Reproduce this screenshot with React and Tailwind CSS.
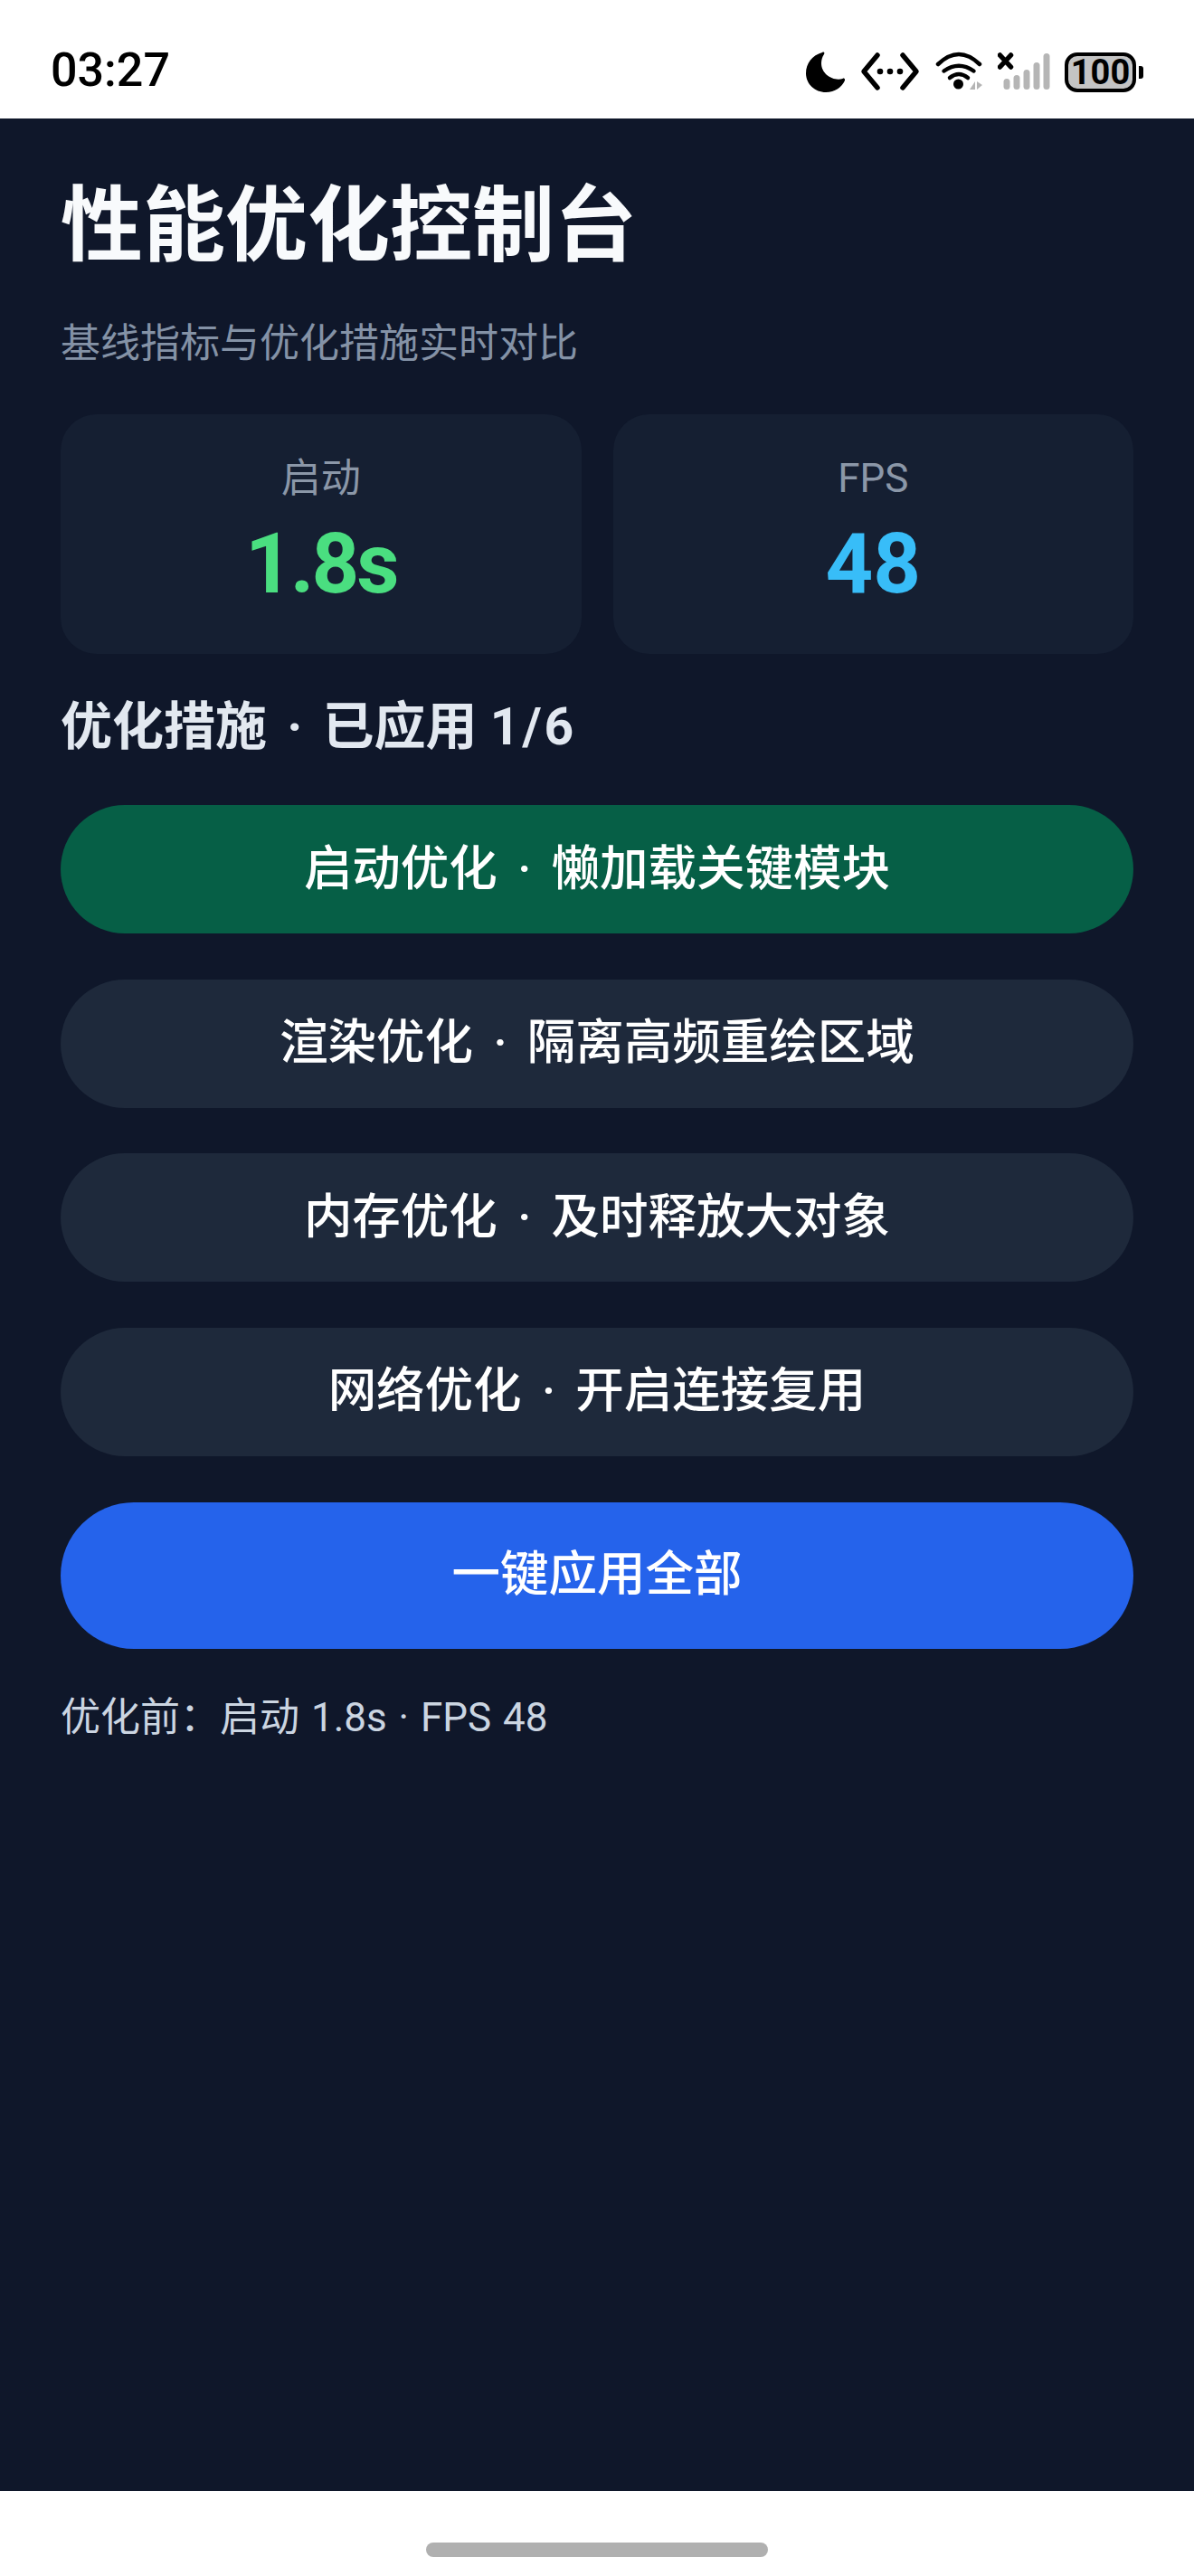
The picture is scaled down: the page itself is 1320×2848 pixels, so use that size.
const cjk = 'font-["Roboto","Noto_Sans_CJK_SC",sans-serif]';

const fixes = [
  { label: '启动优化 · 懒加载关键模块', on: true },
  { label: '渲染优化 · 隔离高频重绘区域' },
  { label: '内存优化 · 及时释放大对象' },
  { label: '网络优化 · 开启连接复用' },
];

const StatusIcons = () => (
  <div className="flex items-center h-[46px]">
    <svg width="44" height="46" viewBox="0 0 44 46" className="mr-[16px]">
      <path d="M18 1C7 4 0 13 0 24c0 12 10 21 22 21 10 0 18-6 21-13 .500-2-1-3-2.500-2C30 33 17 25 17 13c0-4 1-7 3-10 1-2 0-3-2-2z" fill="#000" />
    </svg>
    <svg width="66" height="46" viewBox="0 0 66 46" className="mr-[17px]" fill="none" stroke="#000" strokeWidth="5.500" strokeLinecap="round" strokeLinejoin="round">
      <path d="M19 4 4 22l15 18M47 4l15 18-15 18" />
      <circle cx="22" cy="22" r="3.300" fill="#000" stroke="none" />
      <circle cx="33" cy="22" r="3.300" fill="#000" stroke="none" />
      <circle cx="44" cy="22" r="3.300" fill="#000" stroke="none" />
    </svg>
    <svg width="54" height="46" viewBox="0 0 54 46" className="mr-[15px]" fill="none">
      <path d="M3 14Q26-8 49 14" stroke="#000" strokeWidth="4.500" strokeLinecap="round" />
      <path d="M9.500 21.500Q26 10 42.500 21.500" stroke="#000" strokeWidth="4.500" strokeLinecap="round" />
      <path d="M16 29Q26 21 36 29" stroke="#000" strokeWidth="4.500" strokeLinecap="round" />
      <circle cx="25.500" cy="36" r="5.500" fill="#000" />
      <path d="M44 33v9h-6zM46 33v9l6-5z" fill="#b5b5b5" />
    </svg>
    <svg width="58" height="46" viewBox="0 0 58 46" className="mr-[16px]">
      <path d="M2.500 4l12 13M14.500 4l-12 13" stroke="#000" strokeWidth="5.500" strokeLinecap="round" />
      <rect x="6.500" y="30" width="7" height="12" rx="3.500" fill="#b5b5b5" />
      <rect x="17.500" y="26" width="7" height="16" rx="3.500" fill="#b5b5b5" />
      <rect x="28.500" y="20" width="7" height="22" rx="3.500" fill="#b5b5b5" />
      <rect x="39.500" y="12" width="7" height="30" rx="3.500" fill="#b5b5b5" />
      <rect x="50.500" y="2" width="7" height="40" rx="3.500" fill="#b5b5b5" />
    </svg>
    <div className="flex items-center">
      <div className="w-[79px] h-[44px] rounded-[14px] border-[4px] border-black bg-[#c4c4c4] flex items-center justify-center font-['Roboto',sans-serif] font-bold text-[38px] leading-none text-black">
        100
      </div>
      <div className="w-[5px] h-[14px] rounded-r-[3px] bg-black ml-[3px]" />
    </div>
  </div>
);

const Stat = ({ label, value, color }) => (
  <div className="flex-1 h-[265px] rounded-[40px] bg-[#151f32] flex flex-col items-center pt-[43px]">
    <div className="text-[44px] leading-[56px] text-[#8b97a8]">{label}</div>
    <div className={`text-[92px] leading-[104px] font-bold mt-[15px] ${color}`}>{value}</div>
  </div>
);

export default function App() {
  return (
    <div className={`w-[1320px] h-[2848px] flex flex-col bg-white ${cjk}`}>
      <div className="h-[131px] shrink-0 bg-white flex items-center justify-between pl-[56px] pr-[56px] pt-[28px]">
        <span className="text-[52px] leading-none text-black font-medium font-['Roboto',sans-serif] -mt-[3px]">03:27</span>
        <StatusIcons />
      </div>

      <div className="flex-1 bg-[#0f172a] px-[67px] pt-[61px]">
        <h1 className="text-[91px] leading-[116px] font-bold text-[#f8fafc]">性能优化控制台</h1>
        <p className="text-[44px] leading-[56px] text-[#8492a6] mt-[44px]">基线指标与优化措施实时对比</p>

        <div className="flex gap-[35px] mt-[50px]">
          <Stat label="启动" value="1.8s" color="text-[#4ade80] tracking-[-3px]" />
          <Stat label="FPS" value="48" color="text-[#38bdf8]" />
        </div>

        <h2 className="text-[57px] leading-[72px] font-bold text-[#e2e8f0] mt-[45px]">
          <span className="[word-spacing:8px]">优化措施 · 已应用</span> <span className="tracking-[3px]">1/6</span>
        </h2>

        <div className="flex flex-col gap-[50.500px] mt-[50px]">
          {fixes.map((fix) => (
            <button
              key={fix.label}
              className={`h-[142px] rounded-full flex items-center justify-center text-[53.500px] font-medium text-white [word-spacing:9px] ${fix.on ? 'bg-[#065f46]' : 'bg-[#1e293b]'}`}
            >
              {fix.label}
            </button>
          ))}
        </div>

        <button className="w-full h-[162px] mt-[51px] rounded-[81px] bg-[#2563eb] flex items-center justify-center text-[53.500px] font-medium text-white">
          一键应用全部
        </button>

        <p className="text-[44px] leading-[56px] text-[#cbd5e1] mt-[48px] [word-spacing:2px]">优化前：启动 1.8s · FPS 48</p>
      </div>

      <div className="h-[94px] shrink-0 bg-white flex justify-center pt-[57px]">
        <div className="w-[378px] h-[16px] rounded-full bg-[#b0b0b0]" />
      </div>
    </div>
  );
}
